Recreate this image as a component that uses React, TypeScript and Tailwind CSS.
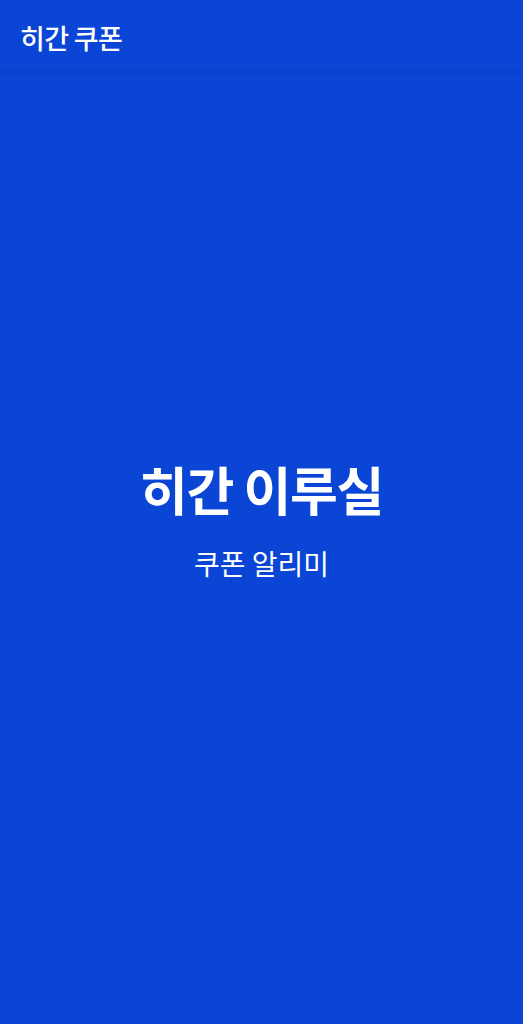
import React from "react";

export default function App() {
  return (
    <div
      className="w-full h-[1024px] bg-[#0b45d6] flex flex-col text-white"
      style={{ fontFamily: '"Noto Sans CJK KR", "Noto Sans", sans-serif' }}
    >
      <header className="h-[72px] shrink-0 flex items-center px-5 pt-[4px] border-b border-[#0a40c8] shadow-[0_1px_2px_rgba(0,0,0,0.06)]">
        <h1 className="text-[27px] font-medium leading-none tracking-tight">히간 쿠폰</h1>
      </header>
      <main className="flex-1 flex flex-col items-center pt-[391px]">
        <div className="text-[52px] font-bold leading-none tracking-tight">히간 이루실</div>
        <div className="mt-[34px] text-[28px] leading-none">쿠폰 알리미</div>
      </main>
    </div>
  );
}
